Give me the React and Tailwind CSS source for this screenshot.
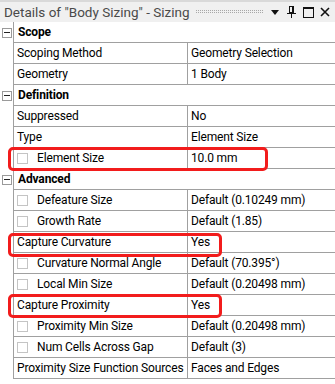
import React from "react";

const rows = [
  { h: "Scope" },
  { l: "Scoping Method", v: "Geometry Selection" },
  { l: "Geometry", v: "1 Body" },
  { h: "Definition" },
  { l: "Suppressed", v: "No" },
  { l: "Type", v: "Element Size" },
  { l: "Element Size", v: "10.0 mm", cb: true },
  { h: "Advanced" },
  { l: "Defeature Size", v: "Default (0.10249 mm)", cb: true },
  { l: "Growth Rate", v: "Default (1.85)", cb: true },
  { l: "Capture Curvature", v: "Yes" },
  { l: "Curvature Normal Angle", v: "Default (70.395°)", cb: true },
  { l: "Local Min Size", v: "Default (0.20498 mm)", cb: true },
  { l: "Capture Proximity", v: "Yes" },
  { l: "Proximity Min Size", v: "Default (0.20498 mm)", cb: true },
  { l: "Num Cells Across Gap", v: "Default (3)", cb: true },
  { l: "Proximity Size Function Sources", v: "Faces and Edges" },
];

function Row({ r }) {
  if (r.h) {
    return (
      <div className="flex h-[21px]">
        <div className="w-[13px] flex items-center justify-start pl-[2px]">
          <div className="w-[10px] h-[10px] border border-[#9a9a9a] bg-white flex items-center justify-center">
            <div className="w-[6px] h-[1px] bg-[#222]" />
          </div>
        </div>
        <div className="flex-1 border-l border-b border-[#a0a0a0] flex items-center pl-[4px] font-bold">
          {r.h}
        </div>
      </div>
    );
  }
  return (
    <div className="flex h-[21px]">
      <div className="w-[13px]" />
      <div className="flex-1 border-l border-b border-[#a0a0a0] flex">
        <div className="w-[174px] border-r border-[#a0a0a0] flex items-center pl-[3px] whitespace-nowrap overflow-hidden">
          {r.cb && (
            <div className="w-[11px] h-[11px] border border-[#c4c4c4] mr-[9px] shrink-0" />
          )}
          {r.l}
        </div>
        <div className="flex-1 flex items-center pl-[3px] whitespace-nowrap">{r.v}</div>
      </div>
    </div>
  );
}

export default function App() {
  return (
    <div
      className="relative w-[335px] h-[384px] bg-white text-[12px] tracking-[-0.15px] text-black overflow-hidden"
      style={{ fontFamily: 'Roboto, "Noto Sans", sans-serif' }}
    >
      <div className="h-[22px] bg-[#f0f0f0] border-t-2 border-[#d9d9d9] flex items-center pl-[4px] pr-[5px] text-[#4a4a4a] text-[13.5px] tracking-[0px]">
        <span className="whitespace-nowrap">Details of "Body Sizing" - Sizing</span>
        <svg className="ml-[6px] flex-1" height="5">
          <defs>
            <pattern id="dots" width="2" height="2" patternUnits="userSpaceOnUse">
              <rect x="0" y="0" width="1" height="1" fill="#a8a8a8" />
            </pattern>
          </defs>
          <rect x="0" y="0" width="100%" height="4" fill="url(#dots)" />
        </svg>
        <svg className="ml-[7px]" width="8" height="5">
          <polygon points="0,0 8,0 4,5" fill="#111" />
        </svg>
        <svg className="ml-[8px]" width="9" height="12" viewBox="0 0 9 12">
          <rect x="2.5" y="0.5" width="4" height="6" fill="none" stroke="#111" />
          <rect x="5" y="1" width="1" height="5" fill="#111" />
          <rect x="0" y="7" width="9" height="1" fill="#111" />
          <rect x="4" y="8" width="1" height="4" fill="#111" />
        </svg>
        <svg className="ml-[7px]" width="11" height="11" viewBox="0 0 11 11">
          <rect x="0.5" y="0.5" width="10" height="10" fill="none" stroke="#111" />
          <rect x="0" y="0" width="11" height="2" fill="#111" />
        </svg>
        <svg className="ml-[6px]" width="10" height="10" viewBox="0 0 10 10">
          <path d="M1 1 L9 9 M9 1 L1 9" stroke="#111" strokeWidth="1.6" />
        </svg>
      </div>
      {rows.map((r, i) => (
        <Row key={i} r={r} />
      ))}

      <div className="absolute left-[8px] top-[147px] w-[260px] h-[24px] border-[3px] border-[#f21c1c] rounded-[5px]" />
      <div className="absolute left-[8px] top-[233px] w-[214px] h-[24px] border-[3px] border-[#f21c1c] rounded-[5px]" />
      <div className="absolute left-[8px] top-[294px] w-[214px] h-[24px] border-[3px] border-[#f21c1c] rounded-[5px]" />
    </div>
  );
}
